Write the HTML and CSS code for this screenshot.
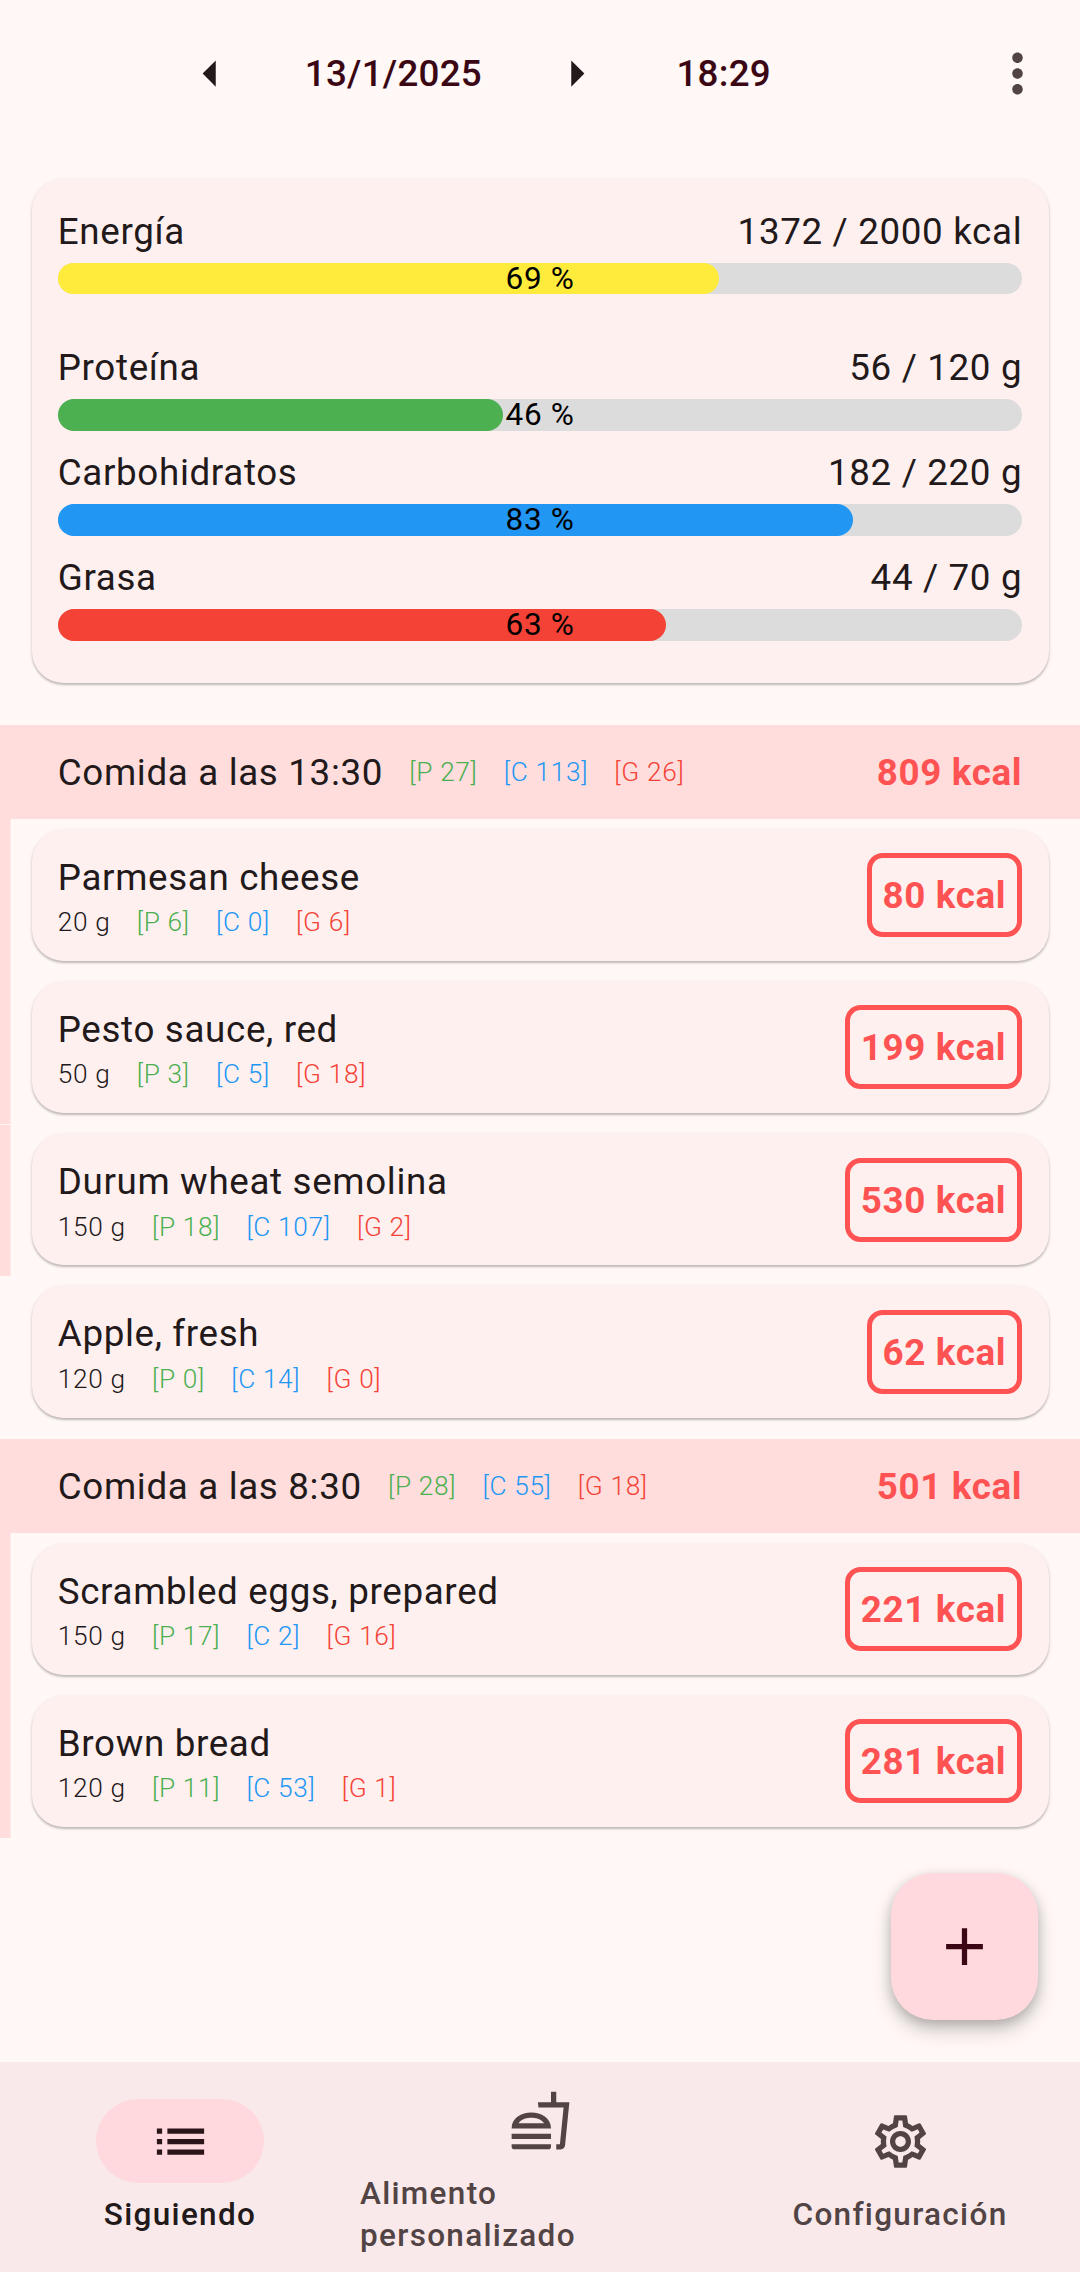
FILE: index.html
```html
<!DOCTYPE html>
<html lang="es">
<head>
<meta charset="utf-8">
<title>Siguiendo</title>
<link rel="stylesheet" href="styles.css">
</head>
<body>
<div class="app">
  <header class="topbar">
    <svg class="icon ink" viewBox="0 0 24 24"><path d="M14 7l-5 5 5 5V7z"/></svg>
    <span class="topbar-text">13/1/2025</span>
    <svg class="icon ink" viewBox="0 0 24 24"><path d="M10 17l5-5-5-5v10z"/></svg>
    <span class="topbar-text">18:29</span>
    <svg class="icon muted menu" viewBox="0 0 24 24"><path d="M12 8c1.100 0 2-.9 2-2s-.9-2-2-2-2 .9-2 2 .9 2 2 2zm0 2c-1.100 0-2 .9-2 2s.9 2 2 2 2-.9 2-2-.9-2-2-2zm0 6c-1.100 0-2 .9-2 2s.9 2 2 2 2-.9 2-2-.9-2-2-2z"/></svg>
  </header>

  <main class="content">
    <section class="card summary">
      <div class="goal goal-energy">
        <div class="goal-row"><span>Energía</span><span>1372 / 2000 kcal</span></div>
        <div class="track"><div class="fill yellow" style="width:68.6%"></div><span class="percent">69 %</span></div>
      </div>
      <div class="goal">
        <div class="goal-row"><span>Proteína</span><span>56 / 120 g</span></div>
        <div class="track"><div class="fill green" style="width:46.2%"></div><span class="percent">46 %</span></div>
      </div>
      <div class="goal">
        <div class="goal-row"><span>Carbohidratos</span><span>182 / 220 g</span></div>
        <div class="track"><div class="fill blue" style="width:82.5%"></div><span class="percent">83 %</span></div>
      </div>
      <div class="goal">
        <div class="goal-row"><span>Grasa</span><span>44 / 70 g</span></div>
        <div class="track"><div class="fill red" style="width:63.1%"></div><span class="percent">63 %</span></div>
      </div>
    </section>

    <section class="meal">
      <div class="meal-head">
        <span>Comida a las 13:30</span>
        <div class="macros"><span class="p">[P 27]</span><span class="c">[C 113]</span><span class="g">[G 26]</span></div>
        <span class="kcal">809 kcal</span>
      </div>
      <div class="entry linked"><div class="card item">
        <div class="info"><div class="name">Parmesan cheese</div><div class="macros"><span>20 g</span><span class="p">[P 6]</span><span class="c">[C 0]</span><span class="g">[G 6]</span></div></div>
        <span class="kcal boxed">80 kcal</span>
      </div></div>
      <div class="entry linked"><div class="card item">
        <div class="info"><div class="name">Pesto sauce, red</div><div class="macros"><span>50 g</span><span class="p">[P 3]</span><span class="c">[C 5]</span><span class="g">[G 18]</span></div></div>
        <span class="kcal boxed">199 kcal</span>
      </div></div>
      <div class="entry linked seam"><div class="card item">
        <div class="info"><div class="name">Durum wheat semolina</div><div class="macros"><span>150 g</span><span class="p">[P 18]</span><span class="c">[C 107]</span><span class="g">[G 2]</span></div></div>
        <span class="kcal boxed">530 kcal</span>
      </div></div>
      <div class="entry"><div class="card item">
        <div class="info"><div class="name">Apple, fresh</div><div class="macros"><span>120 g</span><span class="p">[P 0]</span><span class="c">[C 14]</span><span class="g">[G 0]</span></div></div>
        <span class="kcal boxed">62 kcal</span>
      </div></div>
    </section>

    <section class="meal">
      <div class="meal-head">
        <span>Comida a las 8:30</span>
        <div class="macros"><span class="p">[P 28]</span><span class="c">[C 55]</span><span class="g">[G 18]</span></div>
        <span class="kcal">501 kcal</span>
      </div>
      <div class="entry linked"><div class="card item">
        <div class="info"><div class="name">Scrambled eggs, prepared</div><div class="macros"><span>150 g</span><span class="p">[P 17]</span><span class="c">[C 2]</span><span class="g">[G 16]</span></div></div>
        <span class="kcal boxed">221 kcal</span>
      </div></div>
      <div class="entry linked"><div class="card item">
        <div class="info"><div class="name">Brown bread</div><div class="macros"><span>120 g</span><span class="p">[P 11]</span><span class="c">[C 53]</span><span class="g">[G 1]</span></div></div>
        <span class="kcal boxed">281 kcal</span>
      </div></div>
    </section>
    <button class="fab" aria-label="Añadir"><svg class="icon" viewBox="0 0 24 24"><path d="M19 13h-6v6h-2v-6H5v-2h6V5h2v6h6v2z"/></svg></button>
  </main>

  <nav class="tabs">
    <div class="tab active">
      <div class="pill"><svg class="icon" viewBox="0 0 24 24"><path d="M3 13h2v-2H3v2zm0 4h2v-2H3v2zm0-8h2V7H3v2zm4 4h14v-2H7v2zm0 4h14v-2H7v2zM7 7v2h14V7H7z"/></svg></div>
      <span>Siguiendo</span>
    </div>
    <div class="tab tall">
      <div class="pill"><svg class="icon" viewBox="0 0 24 24"><path d="M1 21.980c0 .56.45 1.010 1.010 1.010H15c.56 0 1.010-.45 1.010-1.010V21H1v.98zM8.500 8.990C4.750 8.990 1 11 1 15h15.010c-.01-4-3.760-6.010-7.510-6.010zM3.620 13c1.110-1.550 3.470-2.010 4.880-2.010s3.770.46 4.880 2.010H3.620zM1 17h15v2H1zM18 5V1h-2v4h-5l.23 2h9.560l-1.400 14H18v2h1.720c.84 0 1.530-.65 1.630-1.470L23 5h-5z"/></svg></div>
      <span>Alimento personalizado</span>
    </div>
    <div class="tab">
      <div class="pill"><svg class="icon" viewBox="0 0 24 24"><path d="M19.430 12.980c.04-.32.07-.64.07-.98 0-.34-.03-.66-.07-.98l2.110-1.650c.19-.15.24-.42.12-.64l-2-3.460c-.09-.16-.26-.25-.44-.25-.06 0-.12.010-.17.030l-2.490 1c-.52-.4-1.080-.73-1.690-.98l-.38-2.650C14.460 2.180 14.250 2 14 2h-4c-.25 0-.46.18-.49.42l-.38 2.650c-.61.25-1.170.59-1.690.98l-2.490-1c-.06-.02-.12-.03-.18-.03-.17 0-.34.09-.43.25l-2 3.460c-.13.22-.07.49.12.64l2.110 1.650c-.04.32-.07.65-.07.98 0 .33.030.66.070.98l-2.110 1.650c-.19.15-.24.42-.12.64l2 3.460c.09.16.26.25.44.25.06 0 .12-.01.17-.03l2.490-1c.52.4 1.080.73 1.690.98l.38 2.650c.03.24.24.42.49.42h4c.25 0 .46-.18.49-.42l.38-2.650c.61-.25 1.170-.59 1.690-.98l2.490 1c.06.02.12.03.18.03.17 0 .34-.09.43-.25l2-3.460c.12-.22.07-.49-.12-.64l-2.110-1.650zm-1.980-1.710c.04.31.05.52.05.73 0 .21-.02.43-.05.73l-.14 1.130.89.7 1.080.84-.7 1.210-1.270-.51-1.040-.42-.9.68c-.43.32-.84.56-1.250.73l-1.060.43-.16 1.130-.2 1.350h-1.400l-.19-1.350-.16-1.130-1.060-.43c-.43-.18-.83-.41-1.230-.71l-.91-.7-1.060.43-1.270.51-.7-1.210 1.080-.84.89-.7-.14-1.130c-.03-.31-.05-.54-.05-.74s.02-.43.05-.73l.14-1.130-.89-.7-1.080-.84.7-1.210 1.270.51 1.040.42.9-.68c.43-.32.84-.56 1.250-.73l1.060-.43.16-1.130.2-1.350h1.390l.19 1.350.16 1.130 1.060.43c.43.18.83.41 1.230.71l.91.7 1.060-.43 1.270-.51.7 1.210-1.070.85-.89.7.14 1.130zM12 8c-2.210 0-4 1.790-4 4s1.790 4 4 4 4-1.790 4-4-1.790-4-4-4zm0 6c-1.100 0-2-.9-2-2s.9-2 2-2 2 .9 2 2-.9 2-2 2z"/></svg></div>
      <span>Configuración</span>
    </div>
  </nav>
</div>
</body>
</html>
```
FILE: styles.css
```css
* { box-sizing: border-box; }

body {
  margin: 0;
  background: #fff8f6;
  color: #22191a;
  font: 400 36.75px/52.5px Roboto, sans-serif;
  letter-spacing: 0.656px;
}

.app {
  display: flex;
  flex-direction: column;
  height: 2272px;
  overflow: hidden;
}

.icon {
  display: block;
  width: 63px;
  height: 63px;
  fill: currentColor;
}

.ink { color: #22191a; }
.muted { color: #524344; }

.topbar {
  display: grid;
  grid-template-columns: 63px 302.75px 63px 232px 1fr;
  align-items: center;
  height: 147px;
  padding: 0 31.5px 0 179px;
}

.topbar-text {
  padding-top: 2px;
  color: #3b0715;
  font-weight: 500;
  letter-spacing: 0.26px;
  text-align: center;
}

.menu { justify-self: end; }

.content {
  position: relative;
  flex: 1;
  padding-top: 31.5px;
}

.card {
  border-radius: 31.5px;
  background: #fff0f0;
  box-shadow: 0 2px 2px rgba(0, 0, 0, 0.2), 0 1px 4px rgba(0, 0, 0, 0.1);
}

.summary {
  display: flex;
  flex-direction: column;
  gap: 15.75px;
  height: 504px;
  margin: 0 31.5px 42px;
  padding: 26.25px;
}

.goal-energy { margin-bottom: 31.5px; }

.goal-row {
  display: flex;
  justify-content: space-between;
  padding-top: 1px;
  margin-bottom: 4.25px;
}

.track {
  display: grid;
  height: 31.5px;
  border-radius: 16px;
  background: #dcdcdc;
}

.fill,
.percent { grid-area: 1 / 1; }

.fill { border-radius: 16px; }

.percent {
  color: #000;
  font-size: 31.5px;
  line-height: 31.5px;
  text-align: center;
}

.yellow { background: #ffeb3b; }
.green { background: #4caf50; }
.blue { background: #2196f3; }
.red { background: #f44336; }

.meal { margin-bottom: 10.5px; }

.meal-head {
  display: flex;
  align-items: center;
  gap: 26.25px;
  height: 94.5px;
  padding: 2px 57.75px 0;
  background: #ffdddd;
}

.macros {
  display: flex;
  gap: 26.25px;
  font-size: 26.25px;
  font-weight: 300;
  line-height: 37.5px;
}

.p { color: #4caf50; }
.c { color: #2196f3; }
.g { color: #f44336; }

.kcal {
  margin-left: auto;
  color: #ff5252;
  font-weight: 700;
}

.boxed {
  height: 84px;
  padding: 1px 11px 0;
  border: 5px solid #ff5252;
  border-radius: 15.75px;
  line-height: 74px;
}

.entry {
  height: 152.25px;
  padding: 10.5px 31.5px;
  background: linear-gradient(#ffdddd, #ffdddd) 0 0 / 0 100% no-repeat;
}

.linked { background-size: 10.5px 100%; }
.seam { background-position: 0 1px; }

.item {
  display: flex;
  align-items: center;
  height: 131.25px;
  padding: 0 26.25px;
}

.info { padding-top: 3px; }

.fab {
  position: absolute;
  right: 42px;
  bottom: 42px;
  display: grid;
  place-items: center;
  width: 147px;
  height: 147px;
  padding: 0;
  border: 0;
  border-radius: 42px;
  background: #ffd9dd;
  color: #3b0715;
  box-shadow: 0 10px 20px rgba(0, 0, 0, 0.2), 0 4px 12px rgba(0, 0, 0, 0.16);
}

.tabs {
  position: relative;
  display: flex;
  height: 210px;
  background: #f9e9ea;
}

.tab {
  display: flex;
  flex: 1;
  flex-direction: column;
  align-items: center;
  gap: 11px;
  padding-top: 37px;
  color: #524344;
  font-size: 31.5px;
  font-weight: 500;
  line-height: 42px;
  letter-spacing: 1.31px;
}

.tall { padding-top: 16px; }

.pill {
  display: grid;
  place-items: center;
  width: 168px;
  height: 84px;
  border-radius: 42px;
}

.active { color: #22191a; }

.active .pill {
  background: #ffd9dd;
  color: #2c1519;
}
```
